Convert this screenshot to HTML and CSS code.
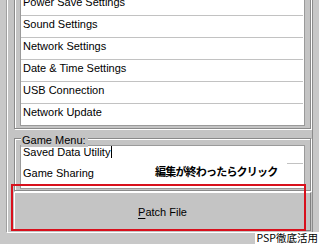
FILE: index.html
```html
<!DOCTYPE html>
<html>
<head>
<meta charset="utf-8">
<link rel="stylesheet" href="styles.css">
</head>
<body>
<div class="frame">
  <div class="group group-settings">
    <ul class="list">
      <li class="row">Power Save Settings</li>
      <li class="row">Sound Settings</li>
      <li class="row">Network Settings</li>
      <li class="row">Date &amp; Time Settings</li>
      <li class="row">USB Connection</li>
      <li class="row last">Network Update</li>
    </ul>
  </div>
  <div class="group group-game">
    <span class="legend">Game Menu:</span>
    <ul class="list list-game">
      <li class="row row-edit">Saved Data Utility<span class="caret"></span></li>
      <li class="row row-share last">Game Sharing</li>
    </ul>
  </div>
  <button class="patch"><u>P</u>atch File</button>
</div>
<div class="note">編集が終わったらクリック</div>
<div class="highlight"></div>
<div class="credit">PSP徹底活用</div>
</body>
</html>
```
FILE: styles.css
```css
html, body {
  margin: 0;
  padding: 0;
}
body {
  width: 319px;
  height: 244px;
  overflow: hidden;
  position: relative;
  background: #c8c8c8;
  font-family: "Liberation Sans", Arial, sans-serif;
  font-size: 11px;
  color: #000;
}
.frame {
  margin: 0 6px;
  border-left: 1px solid #a0a0a0;
  border-right: 1px solid #8c8c8c;
  border-bottom: 1px solid #ffffff;
  box-shadow: inset 1px 0 0 #ffffff;
  padding: 0 1px 1px 7px;
  background: #c4c4c4;
}
.group {
  position: relative;
  border: 1px solid #8a8a8a;
  box-shadow: inset 1px 1px 0 #ffffff, 1px 1px 0 #ffffff;
  padding: 0 5px 2px 5px;
}
.group-settings {
  margin-top: -8px;
}
.group-game {
  margin-top: 9px;
  padding: 6px 5px 1px 5px;
}
.legend {
  position: absolute;
  left: 6px;
  top: -5px;
  line-height: 13px;
  padding: 0 2px 0 1px;
  background: #c4c4c4;
}
.list {
  list-style: none;
  margin: 0;
  padding: 0;
  background: #ffffff;
  border: 1px solid #9a9a9a;
}
.row {
  height: 19px;
  padding: 2px 0 0 2px;
  line-height: 13px;
  border-bottom: 1px solid #c2c2c2;
  margin-right: 1px;
  white-space: nowrap;
}
.row.last {
  border-bottom: none;
}
.row-edit {
  height: 18px;
  padding-top: 0;
  border-bottom: none;
  background: linear-gradient(#c2c2c2, #c2c2c2) no-repeat right bottom / 16px 1px;
}
.row-share {
  height: 21px;
  padding-top: 3px;
}
.caret {
  display: inline-block;
  width: 1px;
  height: 12px;
  background: #000;
  vertical-align: -2px;
  margin-left: 1px;
}
.patch {
  display: block;
  width: 100%;
  height: 39px;
  margin-top: 1px;
  padding: 0;
  background: #c4c4c4;
  border: 1px solid;
  border-color: #ffffff #808080 #808080 #ffffff;
  font-family: "Liberation Sans", Arial, sans-serif;
  font-size: 11px;
  color: #000;
  text-align: center;
}
.patch u {
  text-decoration: underline;
  text-underline-offset: 2px;
}
.note {
  position: absolute;
  left: 155px;
  top: 163px;
  line-height: 17px;
  font-family: "Noto Sans CJK JP", sans-serif;
  font-weight: bold;
  font-size: 11px;
  letter-spacing: -0.8px;
  color: #000;
  white-space: nowrap;
}
.highlight {
  position: absolute;
  left: 11px;
  top: 184px;
  width: 291px;
  height: 43px;
  border: 2.5px solid #d8101c;
}
.credit {
  position: absolute;
  right: 0;
  bottom: 0;
  height: 12px;
  padding: 0 1px 0 2px;
  line-height: 12px;
  background: #ffffff;
  font-family: "Noto Sans CJK JP", sans-serif;
  font-size: 10.5px;
  color: #000;
  white-space: nowrap;
}
```
